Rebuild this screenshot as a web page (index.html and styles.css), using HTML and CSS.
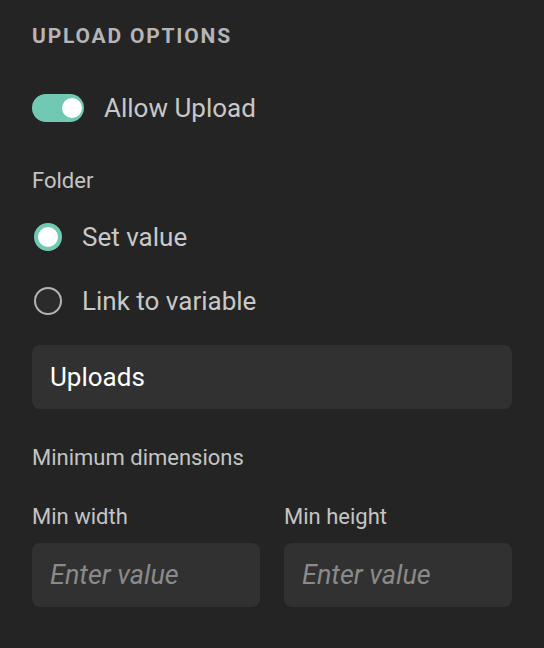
FILE: index.html
```html
<!DOCTYPE html>
<html>
<head>
<meta charset="utf-8">
<link rel="stylesheet" href="styles.css">
</head>
<body>
<div class="panel">
  <h2 class="heading">UPLOAD OPTIONS</h2>
  <div class="toggle-row">
    <span class="toggle"><span class="knob"></span></span>
    <span class="row-text">Allow Upload</span>
  </div>
  <div class="label folder-label">Folder</div>
  <div class="radio-row first">
    <span class="radio checked"></span>
    <span class="row-text">Set value</span>
  </div>
  <div class="radio-row second">
    <span class="radio"></span>
    <span class="row-text">Link to variable</span>
  </div>
  <input class="field folder-field" type="text" value="Uploads">
  <div class="label dims-label">Minimum dimensions</div>
  <div class="dims">
    <div class="dim">
      <div class="label">Min width</div>
      <input class="field" type="text" placeholder="Enter value">
    </div>
    <div class="dim">
      <div class="label">Min height</div>
      <input class="field" type="text" placeholder="Enter value">
    </div>
  </div>
</div>
</body>
</html>
```

FILE: styles.css
```css
html, body {
  margin: 0;
  padding: 0;
  background: #242424;
}
body {
  font-family: Roboto, "Noto Sans", sans-serif;
  color: #c8c8c8;
  width: 544px;
  height: 648px;
  overflow: hidden;
}
.panel {
  padding: 24px 32px 0 32px;
  display: flex;
  flex-direction: column;
}
.heading {
  margin: 0;
  font-size: 21px;
  font-weight: 700;
  line-height: 24px;
  letter-spacing: 1.8px;
  color: #b5b5b5;
}
.toggle-row, .radio-row {
  display: flex;
  align-items: center;
  gap: 20px;
  height: 28px;
}
.toggle-row { margin-top: 46px; }
.toggle {
  position: relative;
  width: 52px;
  height: 28px;
  border-radius: 14px;
  background: #72c9b3;
  flex: none;
}
.knob {
  position: absolute;
  right: 2px;
  top: 4px;
  width: 20px;
  height: 20px;
  border-radius: 50%;
  background: #ffffff;
}
.row-text {
  font-size: 26px;
  line-height: 28px;
  color: #c8c8c8;
}
.label {
  font-size: 22px;
  line-height: 26px;
  color: #c4c4c4;
}
.folder-label { margin-top: 46px; }
.radio-row.first { margin-top: 29px; }
.radio-row.second { margin-top: 36px; }
.radio {
  box-sizing: border-box;
  width: 28px;
  height: 28px;
  border-radius: 50%;
  border: 2px solid #b3b3b3;
  background: #2b2b2b;
  flex: none;
  margin-left: 2px;
}
.radio.checked {
  border: 4px solid #72c9b3;
  background: #ffffff;
}
.field {
  box-sizing: border-box;
  display: block;
  width: 100%;
  height: 64px;
  margin: 0;
  padding: 0 18px;
  border: none;
  outline: none;
  border-radius: 8px;
  background: #313131;
  font-family: Roboto, "Noto Sans", sans-serif;
  font-size: 26px;
  color: #ffffff;
}
.field::placeholder {
  color: #8a8a8a;
  font-style: italic;
  font-size: 27px;
}
.folder-field { margin-top: 30px; }
.dims-label { margin-top: 36px; }
.dims {
  margin-top: 33px;
  display: grid;
  grid-template-columns: 1fr 1fr;
  gap: 24px;
}
.dim {
  display: flex;
  flex-direction: column;
  gap: 13px;
}
```
